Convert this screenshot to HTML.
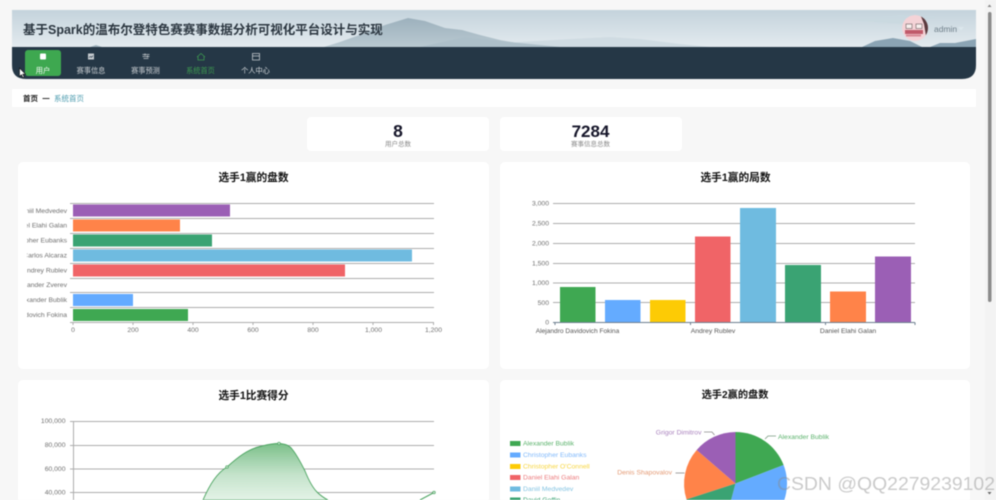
<!DOCTYPE html>
<html lang="zh"><head><meta charset="utf-8"><title>基于Spark的温布尔登特色赛事数据分析可视化平台</title>
<style>
html,body{margin:0;padding:0;width:996px;height:500px;overflow:hidden;background:#f7f7f7}
svg{position:absolute;left:0;top:0;display:block;filter:blur(.4px)}
text{font-family:"Liberation Sans","Noto Sans CJK SC",sans-serif}
.ax{font-size:6.800px;fill:#707070}
.t{font-size:10.700px;font-weight:700;fill:#111;text-anchor:middle}
.g{stroke:#adadad;stroke-width:1}
.n{font-size:7.200px;fill:#c9ced2;text-anchor:middle}
.lg{font-size:6.800px}
</style></head><body>
<svg width="996" height="500" viewBox="0 0 996 500" xmlns="http://www.w3.org/2000/svg">
<defs>
<linearGradient id="sky" x1="0" y1="0" x2="0" y2="1"><stop offset="0" stop-color="#c4d3dc"/><stop offset="1" stop-color="#e4ebef"/></linearGradient>
<linearGradient id="mt" x1="0" y1="0" x2="0" y2="1"><stop offset="0" stop-color="#9db1bd"/><stop offset="1" stop-color="#b9c9d1"/></linearGradient>
<linearGradient id="area" x1="0" y1="0" x2="0" y2="1"><stop offset="0" stop-color="#7cc08a"/><stop offset=".55" stop-color="#c4e3cb"/><stop offset="1" stop-color="#e4f3e7"/></linearGradient>
<clipPath id="hd"><path d="M12 10H976V65Q976 79 962 79H26Q12 79 12 65Z"/></clipPath>
<clipPath id="lb"><rect x="27" y="195" width="42" height="135"/></clipPath>
<clipPath id="av"><circle cx="915" cy="28" r="13"/></clipPath>
<clipPath id="pg"><rect x="0" y="0" width="996" height="500"/></clipPath>
</defs>

<!-- scrollbar -->
<rect x="985" y="0" width="11" height="500" fill="#f3f3f3"/>
<rect x="988" y="12" width="3.500" height="290" rx="1.700" fill="#8b8b8b"/>
<path d="M987.500 7l2-2.500 2 2.500z" fill="#888"/>
<path d="M987.500 492l2 2.500 2-2.500z" fill="#666"/>

<!-- header -->
<g clip-path="url(#hd)">
<rect x="12" y="10" width="964" height="38" fill="url(#sky)"/>
<path d="M470 47L520 42 570 39 610 37 640 39 680 44 710 47Z" fill="#cfdbe2"/>
<path d="M850 20L900 15 940 17 900 24Z" fill="#c9d8e0" opacity=".7"/>
<path d="M324 47L340 42 365 33 385 25 408 18 425 21 445 28 462 30 480 35 500 40 540 47Z" fill="url(#mt)"/>
<path d="M420 47L465 37 510 42 560 47Z" fill="#adbfc9"/>
<path d="M90 47L96 45 102 47Z" fill="#9eb1bc"/>
<path d="M862 47L875 41 893 38 910 41 922 47ZM930 47L940 43 955 43 976 39V47Z" fill="#8ba4b4"/>
<rect x="12" y="47" width="964" height="32" fill="#253746"/>
</g>
<text x="23" y="34" font-size="12.500" font-weight="700" fill="#2b3640">基于Spark的温布尔登特色赛赛事数据分析可视化平台设计与实现</text>

<!-- avatar -->
<g clip-path="url(#av)">
<circle cx="915" cy="28" r="13" fill="#f4d3d7"/>
<path d="M920 14A14 14 0 0 1 929 30L926 36 924 24Z" fill="#5b3a3e"/>
<rect x="905" y="30" width="18" height="4" fill="#c05a6a"/>
<rect x="906" y="34.500" width="15" height="2" fill="#d98a96"/>
<rect x="906" y="24" width="6" height="4.500" fill="#f8f0ee" stroke="#6b5a5c" stroke-width=".6"/>
<rect x="916" y="24" width="6" height="4.500" fill="#f8f0ee" stroke="#6b5a5c" stroke-width=".6"/>
</g>
<text x="934" y="32" font-size="8.500" fill="#6f7f8a">admin</text>
<path d="M958 27l3 3.500 3-3.500z" fill="#dbe6ec"/>

<!-- nav -->
<rect x="25" y="50" width="36" height="26" rx="3" fill="#3ea850"/>
<rect x="40" y="53.500" width="6" height="6" rx="1" fill="#fff"/>
<text x="43" y="73" class="n" style="fill:#fff">用户</text>
<rect x="88" y="53.500" width="6" height="6" fill="#c6cbd0"/><path d="M89 57.500l1.500-1 1 .8 1.500-1.500" stroke="#253746" stroke-width=".7" fill="none"/>
<text x="91" y="73" class="n">赛事信息</text>
<path d="M142.500 54.500h7M142.500 56.500h7M143.500 58.500h5M145 53.500v2M147.500 55.500v2" stroke="#c6cbd0" stroke-width=".8" fill="none"/>
<text x="145.500" y="73" class="n">赛事预测</text>
<path d="M197 57l4-3.500 4 3.500M198 56.500v3.500h6v-3.500" stroke="#3d9a50" stroke-width=".8" fill="none"/>
<text x="200.500" y="73" class="n" style="fill:#3d9a50">系统首页</text>
<path d="M252.500 53.500h7v6.500h-7zM252.500 56h7" stroke="#c6cbd0" stroke-width=".8" fill="none"/>
<text x="255.500" y="73" class="n" style="fill:#d6dadd">个人中心</text>

<!-- cursor -->
<path d="M19.500 68v8.500l2-1.800 1.400 3 1.300-.6-1.400-2.900h2.700z" fill="#fff" stroke="#111" stroke-width=".6"/>

<!-- breadcrumb -->
<rect x="12" y="89" width="964" height="18" fill="#fff"/>
<text x="23" y="101" font-size="7.500" font-weight="700" fill="#222">首页</text>
<rect x="42.500" y="98" width="7" height="1" fill="#333"/>
<text x="54" y="101" font-size="7.500" fill="#4f9db0">系统首页</text>

<!-- stat cards -->
<rect x="307" y="117" width="182" height="34" rx="4" fill="#fff"/>
<rect x="500" y="117" width="182" height="34" rx="4" fill="#fff"/>
<text x="398" y="137" font-size="17.500" font-weight="700" fill="#16162a" text-anchor="middle">8</text>
<text x="398" y="146" font-size="6.500" fill="#8a8a8a" text-anchor="middle">用户总数</text>
<text x="590.500" y="137" font-size="17" font-weight="700" fill="#16162a" text-anchor="middle">7284</text>
<text x="590.500" y="146" font-size="6.500" fill="#8a8a8a" text-anchor="middle">赛事信息总数</text>

<!-- chart cards -->
<rect x="18" y="162" width="471" height="207" rx="5" fill="#fff"/>
<rect x="500" y="162" width="470" height="207" rx="5" fill="#fff"/>
<path d="M18 500V385a5 5 0 0 1 5-5H484a5 5 0 0 1 5 5V500Z" fill="#fff"/>
<path d="M500 500V385a5 5 0 0 1 5-5H965a5 5 0 0 1 5 5V500Z" fill="#fff"/>

<text x="253.500" y="181" class="t">选手1赢的盘数</text>
<text x="735.500" y="181" class="t">选手1赢的局数</text>
<text x="253.500" y="399" class="t">选手1比赛得分</text>
<text x="735" y="398" class="t" style="font-size:10.200px">选手2赢的盘数</text>

<!-- bar chart -->
<g class="g">
<path d="M70 203.500H434M70 218.500H434M70 233.500H434M70 248.500H434M70 263.500H434M70 278.500H434M70 292.500H434M70 307.500H434"/>
<path d="M70 322.500H434M73 322.500V325M133 322.500V325M193 322.500V325M253 322.500V325M313 322.500V325M373 322.500V325M433.500 322.500V325"/>
</g>
<rect x="73" y="204.500" width="157" height="12" fill="#9b5fb5"/>
<rect x="73" y="219.500" width="107" height="12" fill="#ff8349"/>
<rect x="73" y="234.500" width="139" height="12" fill="#3aa373"/>
<rect x="73" y="249.500" width="339" height="12" fill="#6fbbe0"/>
<rect x="73" y="264.500" width="272" height="12" fill="#f06467"/>
<rect x="73" y="294" width="60" height="12" fill="#64abff"/>
<rect x="73" y="309" width="115" height="12" fill="#3fa852"/>
<g clip-path="url(#lb)" class="ax" text-anchor="end">
<text x="67" y="213">Daniil Medvedev</text>
<text x="67" y="227.500">Daniel Elahi Galan</text>
<text x="67" y="242.500">Christopher Eubanks</text>
<text x="67" y="257.500">Carlos Alcaraz</text>
<text x="67" y="272.500">Andrey Rublev</text>
<text x="67" y="287">Alexander Zverev</text>
<text x="67" y="302">Alexander Bublik</text>
<text x="67" y="317">Alejandro Davidovich Fokina</text>
</g>
<g class="ax" text-anchor="middle">
<text x="73" y="332">0</text><text x="133" y="332">200</text><text x="193" y="332">400</text><text x="253" y="332">600</text><text x="313" y="332">800</text><text x="373.500" y="332">1,000</text><text x="433.500" y="332">1,200</text>
</g>

<!-- column chart -->
<g class="g">
<path d="M553 203.500H915M553 223.500H915M553 243.500H915M553 263.500H915M553 283H915M553 302.500H915"/>
</g>
<path d="M553 322.500H915M555 322.500V325M690.500 322.500V325M825.500 322.500V325M915 322.500V325" stroke="#6d7f8f" fill="none"/>
<rect x="560" y="287" width="35.500" height="35" fill="#3fa852"/>
<rect x="605" y="300" width="35.500" height="22" fill="#64abff"/>
<rect x="650" y="300" width="35.500" height="22" fill="#fdcb05"/>
<rect x="695" y="236.500" width="35.500" height="85.500" fill="#f06467"/>
<rect x="740" y="208" width="36" height="114" fill="#6fbbe0"/>
<rect x="785" y="265" width="36" height="57" fill="#3aa373"/>
<rect x="830" y="291.500" width="36" height="30.500" fill="#ff8349"/>
<rect x="875" y="256.500" width="36" height="65.500" fill="#9b5fb5"/>
<g class="ax" text-anchor="end">
<text x="549" y="205.500">3,000</text><text x="549" y="225.500">2,500</text><text x="549" y="245.500">2,000</text><text x="549" y="265.500">1,500</text><text x="549" y="285">1,000</text><text x="549" y="305">500</text><text x="549" y="324.500">0</text>
</g>
<g class="ax" text-anchor="middle" style="fill:#555">
<text x="577.500" y="333" font-size="6.600" style="font-size:6.600px">Alejandro Davidovich Fokina</text><text x="713" y="333">Andrey Rublev</text><text x="848" y="333">Daniel Elahi Galan</text>
</g>

<g clip-path="url(#pg)">
<!-- line chart -->
<g class="g">
<path d="M70 421.500H434M70 445.500H434M70 469H434M70 492.500H434M73.500 421.500V500"/>
</g>
<path d="M203 500C210 484 217 473 227 467C238 457 248 449 262 446C270 444 275 443.500 279 443.500C285 444 289 445 292 449C297 455 301 463 305 471C309 481 313 488 317 492C321 496 324 498 328 500Z" fill="url(#area)" stroke="#4aa35f" stroke-width=".9"/>
<path d="M420 500L434 492.500" stroke="#4aa35f" stroke-width="1" fill="none"/>
<circle cx="227" cy="467" r="1.300" fill="#cfe8d5" stroke="#4aa35f" stroke-width=".7"/>
<circle cx="279" cy="443.500" r="1.300" fill="#cfe8d5" stroke="#4aa35f" stroke-width=".7"/>
<circle cx="434" cy="492.500" r="1.300" fill="#cfe8d5" stroke="#4aa35f" stroke-width=".7"/>
<g class="ax" text-anchor="end">
<text x="65.500" y="423">100,000</text><text x="65.500" y="447">80,000</text><text x="65.500" y="471">60,000</text><text x="65.500" y="494.500">40,000</text>
</g>

<!-- pie -->
<path d="M735.500 483.500V432A51.500 51.500 0 0 1 783.600 465Z" fill="#3fa852"/>
<path d="M735.500 483.500L783.600 465A51.500 51.500 0 0 1 722.200 533.200Z" fill="#64abff"/>
<path d="M735.500 483.500L722.200 533.200A51.500 51.500 0 0 1 686.500 499.400Z" fill="#3aa373"/>
<path d="M735.500 483.500L686.500 499.400A51.500 51.500 0 0 1 696.700 450Z" fill="#ff8349"/>
<path d="M735.500 483.500L696.700 450A51.500 51.500 0 0 1 735.500 432Z" fill="#9b5fb5"/>
<path d="M704 432h8l2.500 3" stroke="#8a8a8a" fill="none" stroke-width=".8"/>
<path d="M675.500 473h9" stroke="#8a8a8a" fill="none" stroke-width=".8"/>
<path d="M765 439l3-3h8" stroke="#7a9a80" fill="none" stroke-width=".8"/>
<text x="701.500" y="434.500" class="lg" fill="#a981bd" text-anchor="end">Grigor Dimitrov</text>
<text x="672" y="474.500" class="lg" fill="#e49a74" text-anchor="end">Denis Shapovalov</text>
<text x="778" y="439" class="lg" fill="#5bb26c">Alexander Bublik</text>

<rect x="510" y="441" width="10.500" height="5" fill="#3fa852"/><text x="523" y="445.500" class="lg" fill="#5bb26c">Alexander Bublik</text>
<rect x="510" y="452.500" width="10.500" height="5" fill="#64abff"/><text x="523" y="457" class="lg" fill="#80b9fb">Christopher Eubanks</text>
<rect x="510" y="464" width="10.500" height="5" fill="#fdcb05"/><text x="523" y="468.500" class="lg" fill="#f8d640">Christopher O'Connell</text>
<rect x="510" y="475" width="10.500" height="5" fill="#f06467"/><text x="523" y="479.500" class="lg" fill="#ec7c7e">Daniel Elahi Galan</text>
<rect x="510" y="486.500" width="10.500" height="5" fill="#6fbbe0"/><text x="523" y="491" class="lg" fill="#85c4e2">Daniil Medvedev</text>
<rect x="510" y="497.500" width="10.500" height="5" fill="#3aa373"/><text x="523" y="502" class="lg" fill="#3aa373">David Goffin</text>
</g>

<!-- watermark -->
<text x="777" y="490" font-size="18.500" fill="#8a8a8a" fill-opacity=".45" textLength="218" lengthAdjust="spacingAndGlyphs">CSDN @QQ2279239102</text>
</svg>
</body></html>
